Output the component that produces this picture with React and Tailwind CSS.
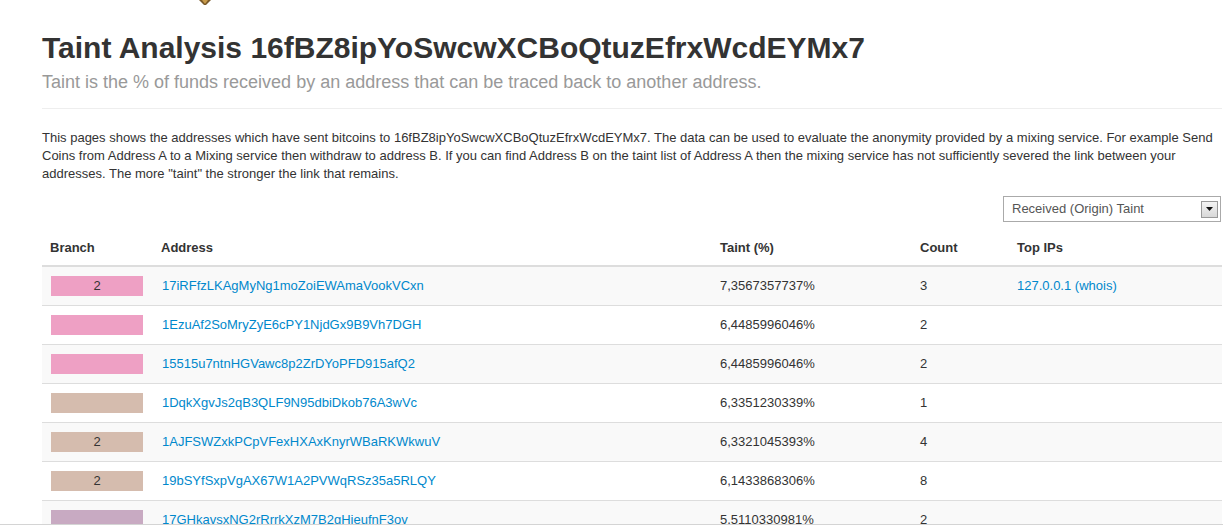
import React from 'react'

const rows = [
  { branch: '2', color: 'bg-[#eea0c4]', address: '17iRFfzLKAgMyNg1moZoiEWAmaVookVCxn', taint: '7,3567357737%', count: '3', ip: '127.0.0.1 (whois)' },
  { branch: '', color: 'bg-[#eea0c4]', address: '1EzuAf2SoMryZyE6cPY1NjdGx9B9Vh7DGH', taint: '6,4485996046%', count: '2' },
  { branch: '', color: 'bg-[#eea0c4]', address: '15515u7ntnHGVawc8p2ZrDYoPFD915afQ2', taint: '6,4485996046%', count: '2' },
  { branch: '', color: 'bg-[#d5bcae]', address: '1DqkXgvJs2qB3QLF9N95dbiDkob76A3wVc', taint: '6,3351230339%', count: '1' },
  { branch: '2', color: 'bg-[#d5bcae]', address: '1AJFSWZxkPCpVFexHXAxKnyrWBaRKWkwuV', taint: '6,3321045393%', count: '4' },
  { branch: '2', color: 'bg-[#d5bcae]', address: '19bSYfSxpVgAX67W1A2PVWqRSz35a5RLQY', taint: '6,1433868306%', count: '8' },
  { branch: '', color: 'bg-[#c8aac2]', address: '17GHkavsxNG2rRrrkXzM7B2gHieufnF3ov', taint: '5,5110330981%', count: '2' }
]

export default function App() {
  return (
    <div className="h-[528px] w-[1223px] overflow-hidden bg-white flex flex-col font-['Liberation_Sans',Arial,sans-serif] text-[#333]">
      <div className="flex-1 min-h-0 overflow-hidden">
        <div className="h-[6px] pl-[198px]">
          <svg width="14" height="6" viewBox="0 0 14 6" aria-hidden="true">
            <path d="M1 0h12L8 5H6Z" fill="#7a5a2a" />
            <path d="M4 0h6L7.5 3.5h-1Z" fill="#c79a4a" />
          </svg>
        </div>

        <div className="ml-[42px] w-[1180px]">
          <h1 className="mt-[23px] text-[30px] leading-[37px] font-bold text-[#333]">
            Taint Analysis 16fBZ8ipYoSwcwXCBoQtuzEfrxWcdEYMx7
          </h1>
          <p className="mt-[6px] text-[18px] leading-[20px] text-[#999]">
            Taint is the % of funds received by an address that can be traced back to another address.
          </p>
          <div className="mt-[16px] h-px bg-[#eee]" />

          <p className="mt-[20px] text-[13px] leading-[18px] text-[#333]">
            This pages shows the addresses which have sent bitcoins to 16fBZ8ipYoSwcwXCBoQtuzEfrxWcdEYMx7. The data can be used to evaluate the anonymity provided by a mixing service. For example Send Coins from Address A to a Mixing service then withdraw to address B. If you can find Address B on the taint list of Address A then the mixing service has not sufficiently severed the link between your addresses. The more "taint" the stronger the link that remains.
          </p>

          <div className="mt-[13px] flex justify-end pr-[1px]">
            <div className="w-[218px] h-[26px] border border-[#aaa] flex items-center justify-between pl-[8px] pr-[2px] text-[13px] text-[#555]">
              <span>Received (Origin) Taint</span>
              <span className="w-[17px] h-[17px] border border-[#999] bg-gradient-to-b from-[#f4f4f4] to-[#d8d8d8] flex items-center justify-center">
                <svg width="7" height="4" viewBox="0 0 7 4" aria-hidden="true">
                  <path d="M0 0h7L3.5 4Z" fill="#111" />
                </svg>
              </span>
            </div>
          </div>

          <table className="mt-[7px] w-[1180px] table-fixed border-collapse text-[13px]">
            <colgroup>
              <col className="w-[111px]" />
              <col className="w-[559px]" />
              <col className="w-[200px]" />
              <col className="w-[97px]" />
              <col />
            </colgroup>
            <thead>
              <tr className="text-left">
                <th className="px-[8px] pt-[8px] pb-[7px] leading-[21px] font-bold border-b-2 border-[#ddd]">Branch</th>
                <th className="px-[8px] pt-[8px] pb-[7px] leading-[21px] font-bold border-b-2 border-[#ddd]">Address</th>
                <th className="px-[8px] pt-[8px] pb-[7px] leading-[21px] font-bold border-b-2 border-[#ddd]">Taint (%)</th>
                <th className="px-[8px] pt-[8px] pb-[7px] leading-[21px] font-bold border-b-2 border-[#ddd]">Count</th>
                <th className="px-[8px] pt-[8px] pb-[7px] leading-[21px] font-bold border-b-2 border-[#ddd]">Top IPs</th>
              </tr>
            </thead>
            <tbody>
              {rows.map((row, i) => (
                <tr key={row.address} className={i % 2 === 0 ? 'bg-[#f9f9f9]' : 'bg-white'}>
                  <td className="h-[39px] px-[8px] border-t border-[#ddd] align-middle">
                    <div className={`ml-[1px] w-[92px] h-[20px] ${row.color} text-center leading-[20px] text-[#333]`}>
                      {row.branch}
                    </div>
                  </td>
                  <td className="h-[39px] px-[8px] border-t border-[#ddd] align-middle">
                    <a className="text-[#0088cc] pl-[1px]">{row.address}</a>
                  </td>
                  <td className="h-[39px] px-[8px] border-t border-[#ddd] align-middle">{row.taint}</td>
                  <td className="h-[39px] px-[8px] border-t border-[#ddd] align-middle">{row.count}</td>
                  <td className="h-[39px] px-[8px] border-t border-[#ddd] align-middle">
                    {row.ip ? <a className="text-[#0088cc]">{row.ip}</a> : null}
                  </td>
                </tr>
              ))}
            </tbody>
          </table>
        </div>
      </div>
      <div className="h-px bg-[#d4d4d4] shrink-0" />
      <div className="h-[3px] bg-white shrink-0" />
    </div>
  )
}
